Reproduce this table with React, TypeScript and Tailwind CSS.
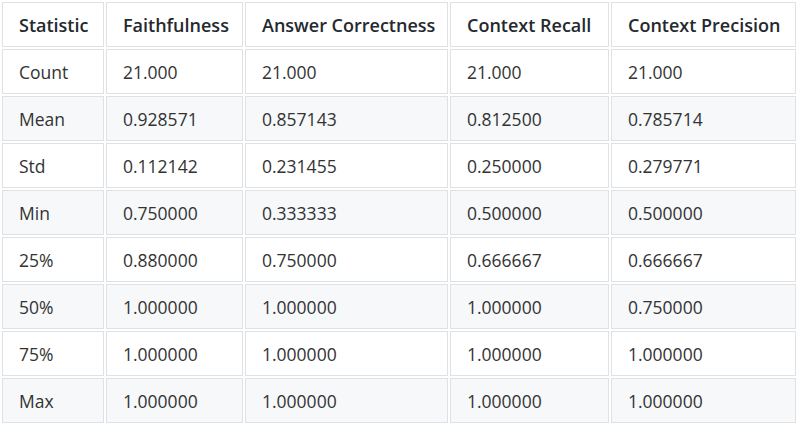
const columns = [
  { label: 'Statistic', width: 'w-[102px]' },
  { label: 'Faithfulness', width: 'w-[137px]' },
  { label: 'Answer Correctness', width: 'w-[203px]' },
  { label: 'Context Recall', width: 'w-[159px]' },
  { label: 'Context Precision', width: 'w-[185px]' },
];

const rows: string[][] = [
  ['Count', '21.000', '21.000', '21.000', '21.000'],
  ['Mean', '0.928571', '0.857143', '0.812500', '0.785714'],
  ['Std', '0.112142', '0.231455', '0.250000', '0.279771'],
  ['Min', '0.750000', '0.333333', '0.500000', '0.500000'],
  ['25%', '0.880000', '0.750000', '0.666667', '0.666667'],
  ['50%', '1.000000', '1.000000', '1.000000', '0.750000'],
  ['75%', '1.000000', '1.000000', '1.000000', '1.000000'],
  ['Max', '1.000000', '1.000000', '1.000000', '1.000000'],
];

export default function App() {
  return (
    <div className="w-[800px] h-[430px] bg-white font-['Open_Sans','Noto_Sans',sans-serif] text-[17.5px] text-[#333333]">
      <table className="border-separate border-spacing-[2px] table-fixed w-[798px]">
        <thead>
          <tr>
            {columns.map((c) => (
              <th
                key={c.label}
                className={`${c.width} h-[45px] border border-[#dfe2e5] pl-4 pr-2 pt-px text-left text-[18px] font-semibold text-[#24292e] bg-white whitespace-nowrap`}
              >
                {c.label}
              </th>
            ))}
          </tr>
        </thead>
        <tbody>
          {rows.map((r, i) => (
            <tr key={r[0]} className={i % 2 === 1 ? 'bg-[#f6f8fa]' : 'bg-white'}>
              {r.map((cell, j) => (
                <td key={j} className="h-[45px] border border-[#dfe2e5] px-4 pt-px text-left">
                  {cell}
                </td>
              ))}
            </tr>
          ))}
        </tbody>
      </table>
    </div>
  );
}
